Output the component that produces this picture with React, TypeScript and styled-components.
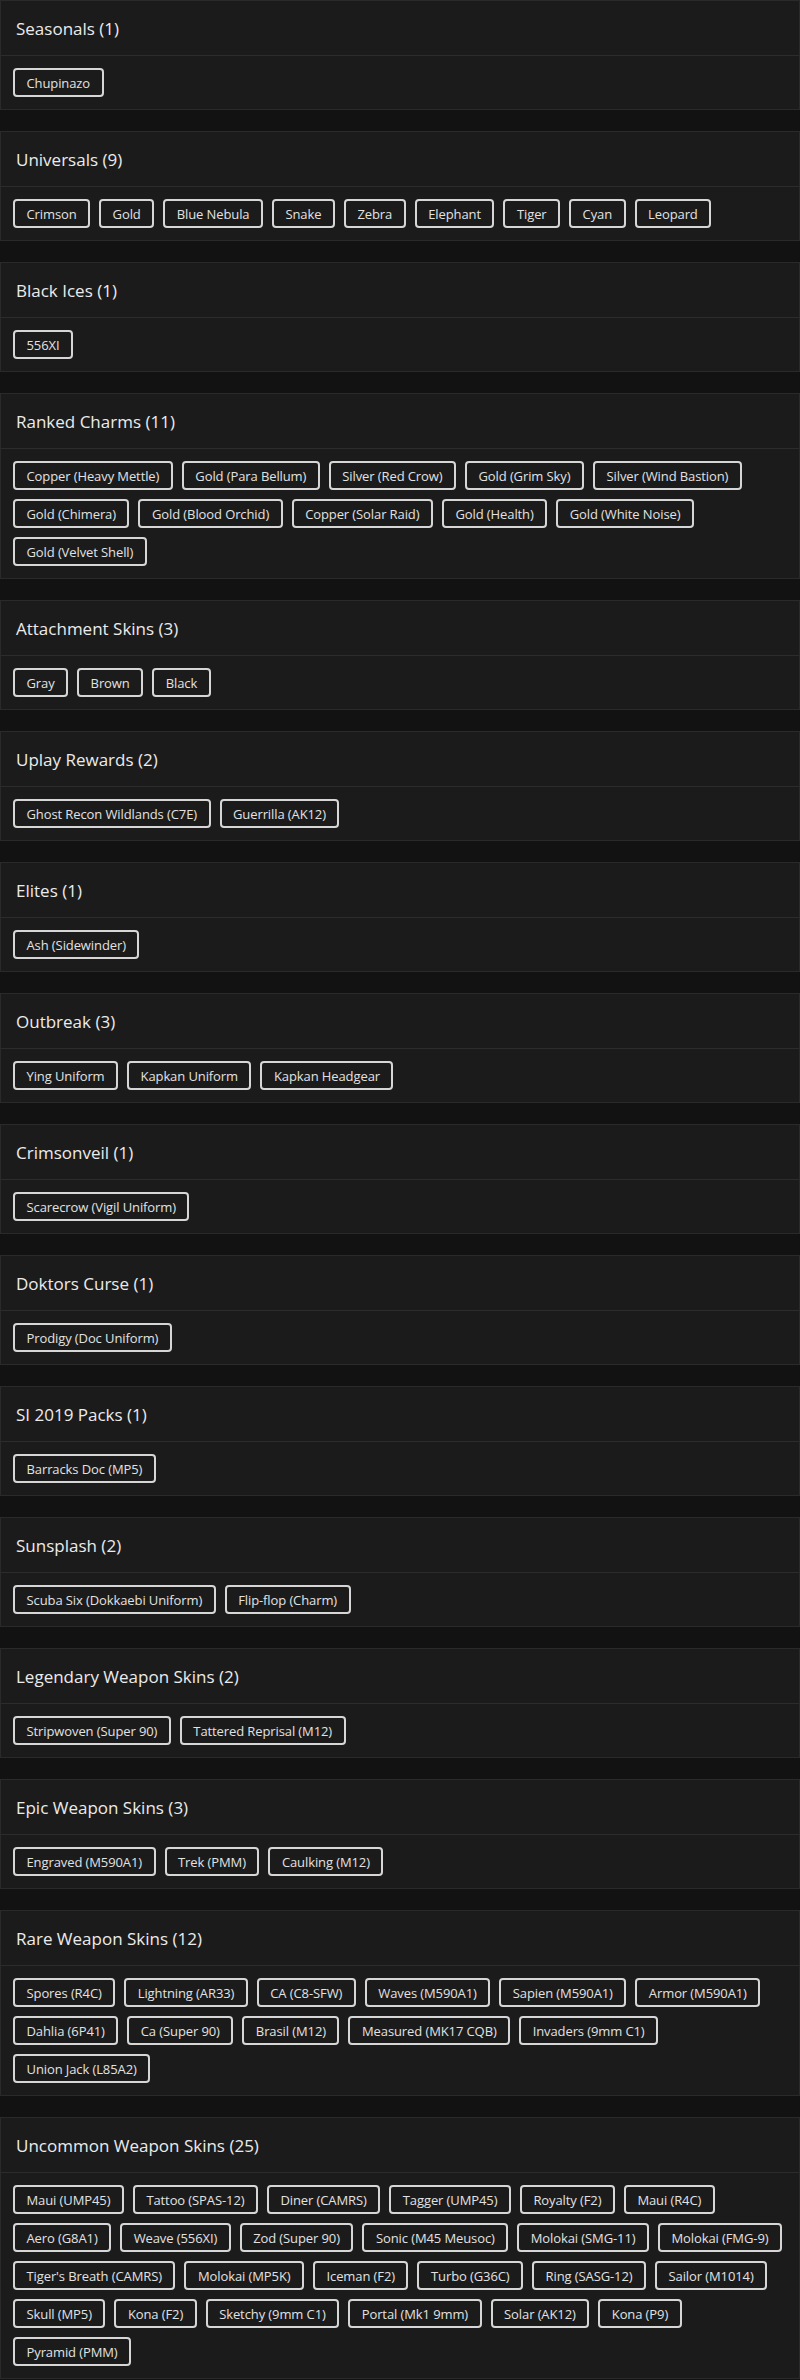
import styled, { createGlobalStyle } from 'styled-components';

const GlobalStyle = createGlobalStyle`
  html, body {
    margin: 0;
    padding: 0;
    background-color: #121212;
  }
  body {
    font-family: 'Open Sans', 'Liberation Sans', sans-serif;
    color: #e6e6e6;
  }
`;

const Page = styled.div`
  display: flex;
  flex-direction: column;
  gap: 21px;
  width: 800px;
`;

const Card = styled.section`
  background-color: #1b1b1b;
  border: 1px solid #2a2a2a;
`;

const CardHeader = styled.div`
  display: flex;
  align-items: center;
  height: 54px;
  padding: 0 15px;
  border-bottom: 1px solid #2c2c2c;
  font-size: 17px;
  font-weight: 500;
  color: #ebebeb;
`;

/* right padding is 12px minus the tags' 9px trailing margin */
const TagList = styled.div`
  display: flex;
  flex-wrap: wrap;
  padding: 12px 3px 3px 12px;
`;

const Tag = styled.span`
  display: inline-flex;
  align-items: center;
  height: 29px;
  box-sizing: border-box;
  margin: 0 9px 9px 0;
  padding: 0 11.5px;
  border: 2px solid #d6d6d6;
  border-radius: 4px;
  font-size: 13px;
  letter-spacing: -0.1px;
  color: #e2e2e2;
  white-space: nowrap;
`;

const LineBreak = styled.span`
  flex-basis: 100%;
  height: 0;
`;

type Group = { title: string; items: string[] };

// '|' forces a new row where the original list wraps early
const groups: Group[] = [
  { title: 'Seasonals', items: ['Chupinazo'] },
  {
    title: 'Universals',
    items: ['Crimson', 'Gold', 'Blue Nebula', 'Snake', 'Zebra', 'Elephant', 'Tiger', 'Cyan', 'Leopard'],
  },
  { title: 'Black Ices', items: ['556XI'] },
  {
    title: 'Ranked Charms',
    items: [
      'Copper (Heavy Mettle)',
      'Gold (Para Bellum)',
      'Silver (Red Crow)',
      'Gold (Grim Sky)',
      'Silver (Wind Bastion)',
      'Gold (Chimera)',
      'Gold (Blood Orchid)',
      'Copper (Solar Raid)',
      'Gold (Health)',
      'Gold (White Noise)',
      '|',
      'Gold (Velvet Shell)',
    ],
  },
  { title: 'Attachment Skins', items: ['Gray', 'Brown', 'Black'] },
  { title: 'Uplay Rewards', items: ['Ghost Recon Wildlands (C7E)', 'Guerrilla (AK12)'] },
  { title: 'Elites', items: ['Ash (Sidewinder)'] },
  { title: 'Outbreak', items: ['Ying Uniform', 'Kapkan Uniform', 'Kapkan Headgear'] },
  { title: 'Crimsonveil', items: ['Scarecrow (Vigil Uniform)'] },
  { title: 'Doktors Curse', items: ['Prodigy (Doc Uniform)'] },
  { title: 'SI 2019 Packs', items: ['Barracks Doc (MP5)'] },
  { title: 'Sunsplash', items: ['Scuba Six (Dokkaebi Uniform)', 'Flip-flop (Charm)'] },
  { title: 'Legendary Weapon Skins', items: ['Stripwoven (Super 90)', 'Tattered Reprisal (M12)'] },
  { title: 'Epic Weapon Skins', items: ['Engraved (M590A1)', 'Trek (PMM)', 'Caulking (M12)'] },
  {
    title: 'Rare Weapon Skins',
    items: [
      'Spores (R4C)',
      'Lightning (AR33)',
      'CA (C8-SFW)',
      'Waves (M590A1)',
      'Sapien (M590A1)',
      'Armor (M590A1)',
      'Dahlia (6P41)',
      'Ca (Super 90)',
      'Brasil (M12)',
      'Measured (MK17 CQB)',
      'Invaders (9mm C1)',
      'Union Jack (L85A2)',
    ],
  },
  {
    title: 'Uncommon Weapon Skins',
    items: [
      'Maui (UMP45)',
      'Tattoo (SPAS-12)',
      'Diner (CAMRS)',
      'Tagger (UMP45)',
      'Royalty (F2)',
      'Maui (R4C)',
      'Aero (G8A1)',
      'Weave (556XI)',
      'Zod (Super 90)',
      'Sonic (M45 Meusoc)',
      'Molokai (SMG-11)',
      'Molokai (FMG-9)',
      "Tiger's Breath (CAMRS)",
      'Molokai (MP5K)',
      'Iceman (F2)',
      'Turbo (G36C)',
      'Ring (SASG-12)',
      'Sailor (M1014)',
      'Skull (MP5)',
      'Kona (F2)',
      'Sketchy (9mm C1)',
      'Portal (Mk1 9mm)',
      'Solar (AK12)',
      'Kona (P9)',
      'Pyramid (PMM)',
    ],
  },
];

export default function App() {
  return (
    <>
      <GlobalStyle />
      <Page>
        {groups.map((group) => {
          const count = group.items.filter((i) => i !== '|').length;
          return (
            <Card key={group.title}>
              <CardHeader>
                {group.title} ({count})
              </CardHeader>
              <TagList>
                {group.items.map((item, idx) =>
                  item === '|' ? <LineBreak key={idx} /> : <Tag key={idx}>{item}</Tag>
                )}
              </TagList>
            </Card>
          );
        })}
      </Page>
    </>
  );
}
